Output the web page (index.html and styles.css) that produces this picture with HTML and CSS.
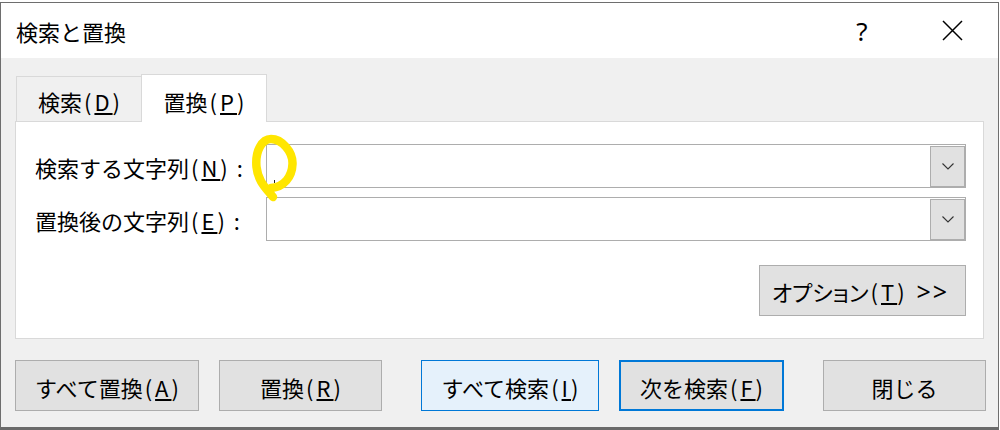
FILE: index.html
```html
<!DOCTYPE html>
<html lang="ja">
<head>
<meta charset="utf-8">
<title>検索と置換</title>
<link rel="stylesheet" href="styles.css">
</head>
<body>
<div class="window">
  <div class="titlebar">
    <span class="title">検索と置換</span>
    <span class="help">?</span>
    <span class="close">
      <svg width="21" height="21" viewBox="0 0 21 21"><path d="M1 1 L20 20 M20 1 L1 20" stroke="#000" stroke-width="1.5" fill="none"/></svg>
    </span>
  </div>
  <div class="body">
    <div class="tabs">
      <div class="tab">検索<span class="m">(<u>D</u>)</span></div>
      <div class="tab active">置換<span class="m">(<u>P</u>)</span></div>
    </div>
    <div class="panel">
      <div class="row">
        <span class="label">検索する文字列<span class="m">(<u>N</u>)</span><span class="colon">:</span></span>
        <div class="combo">
          <span class="drop"><svg width="12" height="7" viewBox="0 0 12 7"><polyline points="0.5,0.5 6,6 11.5,0.5" fill="none" stroke="#333" stroke-width="1.1"/></svg></span>
        </div>
      </div>
      <div class="row">
        <span class="label">置換後の文字列<span class="m">(<u>E</u>)</span><span class="colon">:</span></span>
        <div class="combo">
          <span class="drop"><svg width="12" height="7" viewBox="0 0 12 7"><polyline points="0.5,0.5 6,6 11.5,0.5" fill="none" stroke="#333" stroke-width="1.1"/></svg></span>
        </div>
      </div>
      <div class="opt-row">
        <button class="btn opt"><span class="kana">オプション</span><span class="m">(<u>T</u>)</span> <span class="gt">&gt;&gt;</span></button>
      </div>
    </div>
    <div class="actions">
      <button class="btn b-replace-all">すべて置換<span class="m">(<u>A</u>)</span></button>
      <button class="btn b-replace">置換<span class="m">(<u>R</u>)</span></button>
      <button class="btn b-find-all">すべて検索<span class="m">(<u>I</u>)</span></button>
      <button class="btn b-next">次を検索<span class="m">(<u>F</u>)</span></button>
      <button class="btn b-close">閉じる</button>
    </div>
  </div>
</div>
<svg class="mark" width="1000" height="430" viewBox="0 0 1000 430">
  <rect x="274" y="180" width="1" height="3" fill="#222"/>
  <path d="M273 197 C267 189 258 182 256.5 167 C255 151 262 139 271 139 C282 139 293 152 292.5 164 C292 177 284 187 271 188" fill="none" stroke="#ffe600" stroke-width="8.5" stroke-linecap="round" stroke-linejoin="round"/>
</svg>
</body>
</html>
```
FILE: styles.css
```css
html, body {
  margin: 0;
  padding: 0;
}
body {
  background: #ffffff;
  font-family: "Noto Sans CJK JP", "Noto Sans", sans-serif;
  color: #000;
  position: relative;
  width: 1000px;
  height: 430px;
  overflow: hidden;
}
.window {
  margin: 2px 1px 0 0;
  width: 997px;
  height: 424px;
  border: 1px solid #6e6e6e;
  border-bottom: 3px solid #6a6a6a;
  display: flex;
  flex-direction: column;
}
.titlebar {
  height: 55px;
  flex: none;
  background: #fff;
  display: flex;
  align-items: center;
  padding: 0 23px 0 15px;
}
.title {
  font-size: 22px;
  line-height: 1;
}
.help {
  margin-left: auto;
  width: 46px;
  text-align: center;
  font-family: "Noto Sans", sans-serif;
  font-size: 26px;
  line-height: 1;
}
.close {
  width: 46px;
  display: flex;
  justify-content: center;
  margin-left: 44px;
}
.close svg {
  display: block;
}
.body {
  flex: 1;
  background: #f0f0f0;
  padding: 16px 14px 0;
}
.tabs {
  display: flex;
  align-items: flex-end;
  height: 47px;
  padding-left: 1px;
}
.tab {
  box-sizing: border-box;
  width: 125px;
  height: 45px;
  border-top: 1px solid #d9d9d9;
  border-left: 1px solid #d9d9d9;
  display: flex;
  align-items: center;
  justify-content: center;
  font-size: 22px;
  line-height: 1;
  padding-top: 3px;
  padding-left: 3px;
}
.tab.active {
  width: 126px;
  height: 48px;
  margin-bottom: -1px;
  background: #fff;
  border-right: 1px solid #d9d9d9;
  position: relative;
  padding-top: 4px;
}
.m {
  letter-spacing: 3px;
  margin-left: 2px;
}
.b-replace-all .m,
.b-replace .m,
.b-find-all .m,
.b-next .m {
  margin-right: -3px;
}
.colon {
  margin-left: 6px;
}
u {
  text-underline-offset: 2px;
  text-decoration-thickness: 1.5px;
}
.kana {
  font-feature-settings: "palt";
}
.gt {
  font-family: "Noto Sans", sans-serif;
  font-size: 25px;
  letter-spacing: 2px;
  margin-left: 4px;
}
.panel {
  box-sizing: border-box;
  height: 218px;
  background: #fff;
  border: 1px solid #d9d9d9;
  padding: 22px 17px 0 19px;
}
.row {
  display: flex;
  align-items: center;
  height: 44px;
}
.row + .row {
  margin-top: 9px;
}
.label {
  width: 231px;
  flex: none;
  font-size: 22px;
  line-height: 1;
  padding-top: 2px;
  white-space: nowrap;
}
.combo {
  flex: 1;
  height: 44px;
  box-sizing: border-box;
  border: 1px solid #adadad;
  background: #fff;
  display: flex;
  justify-content: flex-end;
}
.drop {
  box-sizing: border-box;
  width: 35px;
  height: 41px;
  margin-top: 1px;
  border: 1px solid #adadad;
  background: #e1e1e1;
  display: flex;
  align-items: center;
  justify-content: center;
}
.drop svg {
  display: block;
}
.opt-row {
  display: flex;
  justify-content: flex-end;
  margin-top: 24px;
}
.btn {
  box-sizing: border-box;
  height: 51px;
  border: 1px solid #adadad;
  background: #e1e1e1;
  font-family: inherit;
  font-size: 22px;
  line-height: 1;
  color: #000;
  padding: 2px 0 0;
  margin: 0;
  flex: none;
  white-space: nowrap;
}
.opt {
  width: 207px;
  padding-right: 4px;
}
.actions {
  display: flex;
  margin-top: 21px;
}
.b-replace-all { width: 184px; }
.b-replace { width: 163px; margin-left: 20px; }
.b-find-all {
  width: 178px;
  margin-left: 39px;
  background: #e5f1fb;
  border-color: #0078d7;
}
.b-next {
  width: 165px;
  margin-left: 20px;
  border: 2px solid #0078d7;
}
.b-close { width: 163px; margin-left: 39px; }
.mark {
  position: absolute;
  left: 0;
  top: 0;
  pointer-events: none;
}
```
